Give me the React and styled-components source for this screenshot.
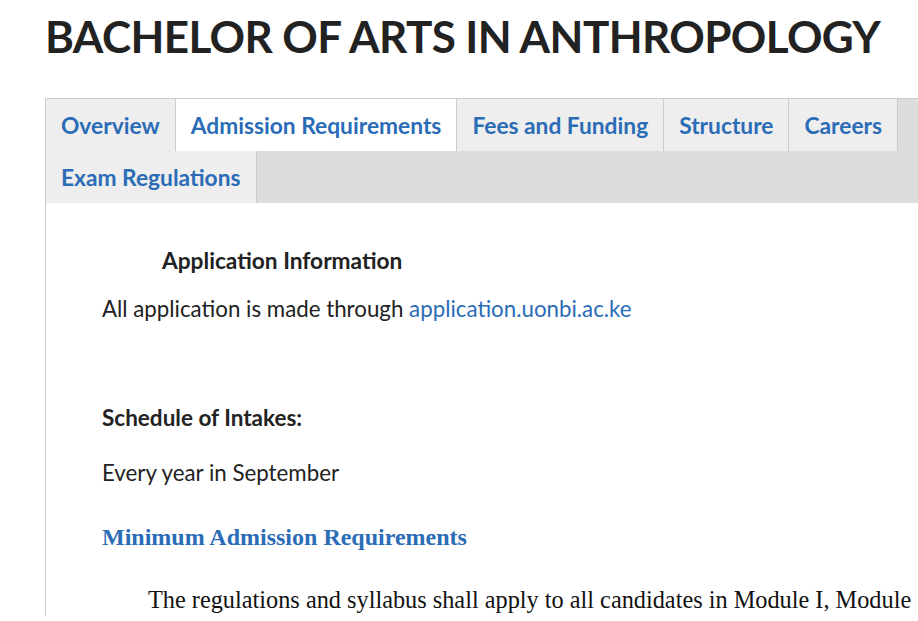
import React from "react";
import styled, { createGlobalStyle } from "styled-components";

const GlobalStyle = createGlobalStyle`
  html, body {
    margin: 0;
    padding: 0;
    background: #fff;
    overflow: hidden;
  }
  body {
    font-family: Lato, "Open Sans", sans-serif;
    color: #222;
  }
`;

const Page = styled.div`
  width: 1100px;
  padding: 10px 0 0 45px;
`;

const Title = styled.h1`
  margin: 0 0 36px 0;
  font-size: 44px;
  font-weight: 700;
  letter-spacing: -0.6px;
  line-height: 52px;
  color: #222;
`;

const Tabs = styled.div`
  width: 1000px;
  border: 1px solid #ccc;
  border-bottom: none;
`;

const TabStrip = styled.ul`
  list-style: none;
  margin: 0;
  padding: 0;
  display: flex;
  flex-wrap: wrap;
  background: #ddd;
`;

const Tab = styled.li`
  padding: 11px 15px 9px;
  line-height: 32px;
  font-size: 22.75px;
  font-weight: 700;
  color: #2b6cb7;
  background: ${(p) => (p.$active ? "#fff" : "#eee")};
  border-right: 1px solid #ccc;
`;

const Panel = styled.div`
  padding: 41px 56px 0;
`;

const Heading = styled.h4`
  margin: 0;
  padding-left: 60px;
  font-size: 22.7px;
  font-weight: 700;
  line-height: 33px;
`;

const Para = styled.p`
  margin: ${(p) => p.$mt || 0}px 0 0;
  font-size: ${(p) => (p.$bold ? 22.5 : 22.3)}px;
  line-height: 33px;
  font-weight: ${(p) => (p.$bold ? 700 : 400)};
`;

const Link = styled.a`
  color: #2b6cb7;
  text-decoration: none;
`;

const SerifHeading = styled.h3`
  margin: 32px 0 0;
  font-family: "Liberation Serif", "Times New Roman", serif;
  font-size: 24px;
  font-weight: 700;
  line-height: 33px;
  color: #2b6cb7;
`;

const SerifPara = styled.p`
  margin: 29px 0 0;
  font-family: "Liberation Serif", "Times New Roman", serif;
  font-size: 24.3px;
  line-height: 33px;
  text-indent: 46px;
  white-space: nowrap;
  color: #111;
`;

const tabs = [
  "Overview",
  "Admission Requirements",
  "Fees and Funding",
  "Structure",
  "Careers",
  "Exam Regulations",
];

export default function App() {
  return (
    <>
      <GlobalStyle />
      <Page>
        <Title>BACHELOR OF ARTS IN ANTHROPOLOGY</Title>
        <Tabs>
          <TabStrip>
            {tabs.map((t) => (
              <Tab key={t} $active={t === "Admission Requirements"}>
                {t}
              </Tab>
            ))}
          </TabStrip>
          <Panel>
            <Heading>Application Information</Heading>
            <Para $mt={15}>
              All application is made through{" "}
              <Link href="#">application.uonbi.ac.ke</Link>
            </Para>
            <Para $mt={76} $bold>
              Schedule of Intakes:
            </Para>
            <Para $mt={22}>Every year in September</Para>
            <SerifHeading>Minimum Admission Requirements</SerifHeading>
            <SerifPara>
              The regulations and syllabus shall apply to all candidates in
              Module I, Module
            </SerifPara>
          </Panel>
        </Tabs>
      </Page>
    </>
  );
}
